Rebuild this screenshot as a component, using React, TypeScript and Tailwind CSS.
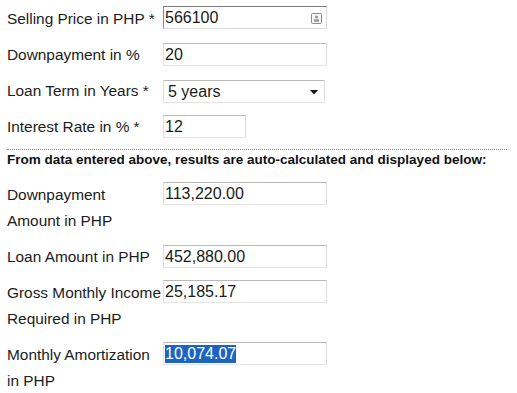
import React from "react";

function Box({ children, w = "w-[164px]", focused = false, icon = false, select = false, mt = "mt-0" }: { children?: React.ReactNode; w?: string; focused?: boolean; icon?: boolean; select?: boolean; mt?: string }) {
  const border = focused
    ? "border-t-[#7a7a7a] border-l-[#8a8a8a] border-r-[#dcdcdc] border-b-[#dcdcdc]"
    : "border-t-[#b9b9b9] border-l-[#dedede] border-r-[#dedede] border-b-[#e4e4e4]";
  return (
    <div className={`relative ${w} h-[23px] ${mt} border ${border} bg-white flex items-center pl-[1px] text-[16px] text-[#1a1a1a] leading-none`}>
      {children}
      {icon && (
        <svg className="absolute right-[4px] top-[6px]" width="11" height="11" viewBox="0 0 11 11">
          <rect x="0.5" y="0.5" width="10" height="10" rx="1" fill="#f4f4f4" stroke="#8a8a8a" />
          <circle cx="5.5" cy="4" r="1.6" fill="#9a9a9a" />
          <rect x="3" y="6.2" width="5" height="2.6" fill="#9a9a9a" />
        </svg>
      )}
      {select && (
        <svg className="absolute right-[6px] top-[9px]" width="8" height="5" viewBox="0 0 8 5">
          <path d="M0 0 L8 0 L4 4.5 Z" fill="#111" />
        </svg>
      )}
    </div>
  );
}

function Row({ label, children, mb = "mb-[10px]" }: { label: React.ReactNode; children: React.ReactNode; mb?: string }) {
  return (
    <div className={`flex items-start ${mb}`}>
      <div className="w-[156px] shrink-0 whitespace-nowrap leading-[26px] text-[15.4px] text-[#1c1c1c]">{label}</div>
      {children}
    </div>
  );
}

export default function App() {
  return (
    <div className="w-[517px] h-[393px] bg-white pl-[7px] pt-[6px] font-['Liberation_Sans',Arial,sans-serif] overflow-hidden">
      <Row label="Selling Price in PHP *">
        <Box focused icon>566100</Box>
      </Row>
      <Row label="Downpayment in %">
        <Box mt="mt-[1px]">20</Box>
      </Row>
      <Row label="Loan Term in Years *">
        <Box w="w-[162px]" select mt="mt-[2px]">
          <span className="pl-[3px]">5 years</span>
        </Box>
      </Row>
      <Row label="Interest Rate in % *" mb="mb-0">
        <Box w="w-[83px]" mt="mt-[1px]">12</Box>
      </Row>
      <div className="mt-[9px] w-[500px] border-t border-dotted border-[#8c8c8c]" />
      <div className="text-[13.5px] font-bold leading-[20px] text-[#111] whitespace-nowrap">
        From data entered above, results are auto-calculated and displayed below:
      </div>
      <div className="mt-[12px]">
        <Row label={<>Downpayment<br />Amount in PHP</>}>
          <Box>113,220.00</Box>
        </Row>
        <Row label="Loan Amount in PHP" mb="mb-[10px]">
          <Box mt="mt-[1px]">452,880.00</Box>
        </Row>
        <Row label={<>Gross Monthly Income<br />Required in PHP</>}>
          <Box>25,185.17</Box>
        </Row>
        <Row label={<>Monthly Amortization<br />in PHP</>}>
          <Box>
            <span className="bg-[#1b64c4] text-white leading-[18px]">10,074.07</span>
          </Box>
        </Row>
      </div>
    </div>
  );
}
